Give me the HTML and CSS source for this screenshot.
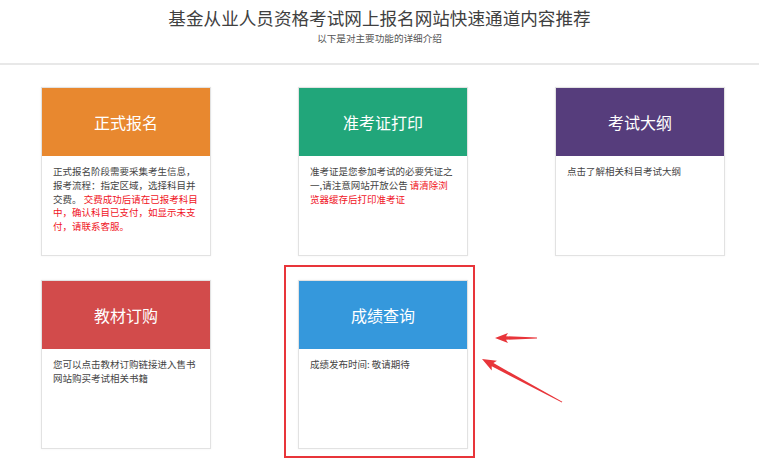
FILE: index.html
```html
<!DOCTYPE html>
<html lang="zh-CN">
<head>
<meta charset="utf-8">
<title>基金从业人员资格考试网上报名网站快速通道内容推荐</title>
<link rel="stylesheet" href="styles.css">
</head>
<body>
<header class="page-head">
  <h1 class="title">基金从业人员资格考试网上报名网站快速通道内容推荐</h1>
  <p class="subtitle">以下是对主要功能的详细介绍</p>
</header>
<main class="grid">
  <section class="card">
    <div class="card-head orange">正式报名</div>
    <div class="card-body">正式报名阶段需要采集考生信息，报考流程：指定区域，选择科目并交费。 <span class="warn">交费成功后请在已报考科目中，确认科目已支付，如显示未支付，请联系客服。</span></div>
  </section>
  <section class="card">
    <div class="card-head green">准考证打印</div>
    <div class="card-body">准考证是您参加考试的必要凭证之一,请注意网站开放公告 <span class="warn">请清除浏<br>览器缓存后打印准考证</span></div>
  </section>
  <section class="card">
    <div class="card-head purple">考试大纲</div>
    <div class="card-body">点击了解相关科目考试大纲</div>
  </section>
  <section class="card">
    <div class="card-head red">教材订购</div>
    <div class="card-body">您可以点击教材订购链接进入售书网站购买考试相关书籍</div>
  </section>
  <section class="card marked">
    <div class="card-head blue">成绩查询</div>
    <div class="card-body">成绩发布时间: 敬请期待</div>
    <span class="mark-box"></span>
  </section>
</main>
<svg class="arrows" width="759" height="465" viewBox="0 0 759 465" aria-hidden="true">
  <g fill="#e8353a">
    <polygon transform="translate(495 338)" points="0,0 13,-5 11,-1.7 42,-0.6 42,0.6 11,1.7 13,5"/>
    <polygon transform="translate(482 359) rotate(28.3)" points="0,0 14,-5.5 12,-1.8 91,-0.4 91,0.4 12,1.8 14,5.5"/>
  </g>
</svg>
</body>
</html>
```

FILE: styles.css
```css
html, body {
  margin: 0;
  padding: 0;
  background: #fff;
}
body {
  position: relative;
  width: 759px;
  height: 465px;
  overflow: hidden;
  font-family: "Microsoft YaHei", "Noto Sans CJK SC", "Noto Sans", sans-serif;
  color: #444;
}
.page-head {
  text-align: center;
  padding-top: 6px;
  height: 57px;
  border-bottom: 2px solid #e8e8e8;
}
.title {
  margin: 0;
  font-size: 17.6px;
  line-height: 24px;
  font-weight: 400;
  color: #404040;
}
.subtitle {
  margin: 1px 0 0;
  font-size: 9.6px;
  line-height: 14px;
  color: #555;
}
.grid {
  display: grid;
  grid-template-columns: repeat(3, 170px);
  grid-auto-rows: 169px;
  column-gap: 87px;
  row-gap: 24px;
  margin: 22px 0 0 41px;
}
.card {
  position: relative;
  box-sizing: border-box;
  border: 1px solid #e2e2e2;
  background: #fff;
  box-shadow: 0 0 2px rgba(0,0,0,0.06);
}
.card-head {
  height: 68px;
  display: flex;
  align-items: center;
  justify-content: center;
  color: #fff;
  font-size: 16px;
}
.orange { background: #e8882f; }
.green { background: #21a67a; }
.purple { background: #563d7c; }
.red { background: #d24b4b; }
.blue { background: #3598dc; }
.card-body {
  padding: 9px 8.5px 0 11px;
  font-size: 9.5px;
  line-height: 13.8px;
  color: #444;
}
.warn {
  color: #f0141e;
}
.mark-box {
  position: absolute;
  left: -15px;
  top: -16px;
  right: -8px;
  bottom: -10px;
  border: 2px solid #e8353a;
  pointer-events: none;
}
.arrows {
  position: absolute;
  left: 0;
  top: 0;
  pointer-events: none;
}
```
